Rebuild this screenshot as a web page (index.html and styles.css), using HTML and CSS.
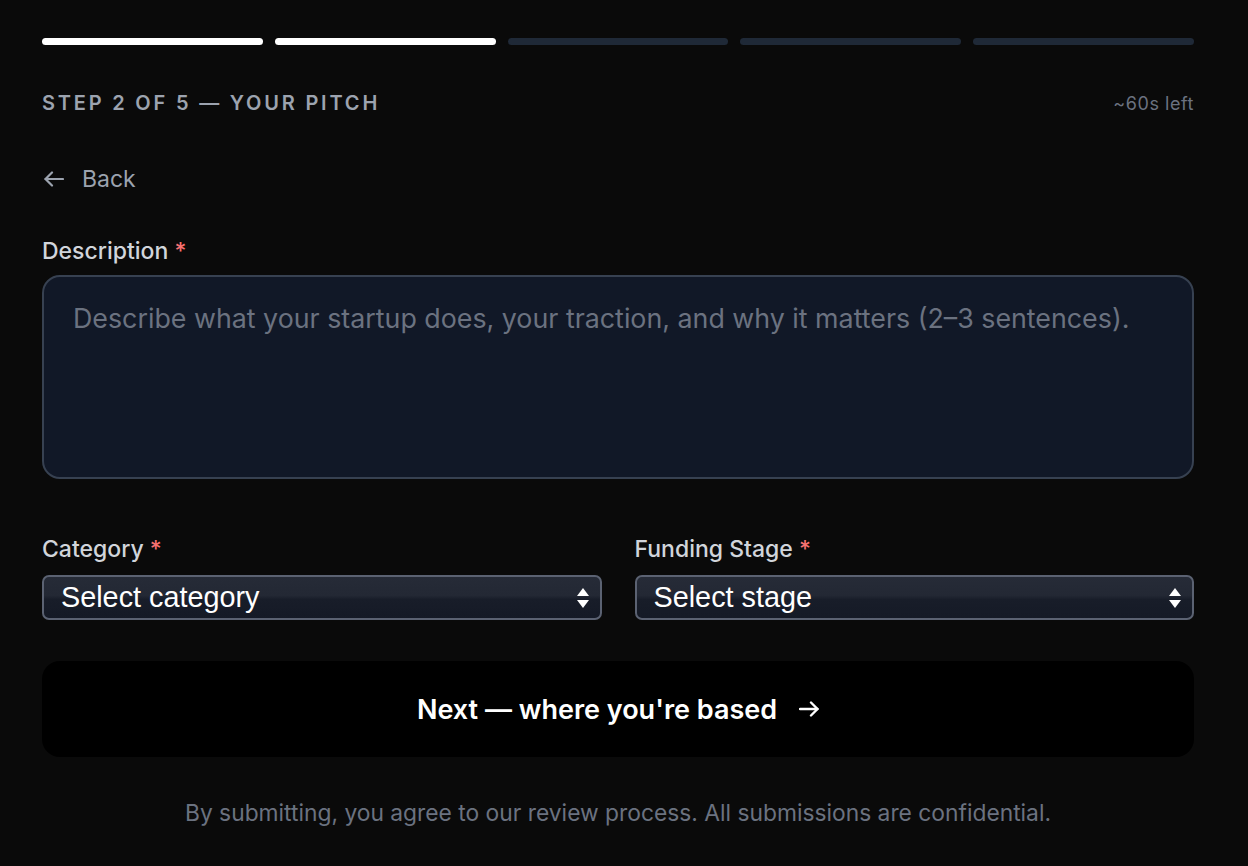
FILE: index.html
```html
<!DOCTYPE html>
<html lang="en">
<head>
<meta charset="utf-8">
<title>Step 2 of 5 — Your pitch</title>
<link rel="stylesheet" href="styles.css">
</head>
<body>
<main class="wizard">
  <div class="progress">
    <span class="seg done"></span>
    <span class="seg done"></span>
    <span class="seg"></span>
    <span class="seg"></span>
    <span class="seg"></span>
  </div>
  <div class="step-row">
    <span class="step-title">Step 2 of 5 — Your pitch</span>
    <span class="time-left">~60s left</span>
  </div>
  <button class="back" type="button">
    <svg width="20" height="16" viewBox="0 0 20 16" fill="none" stroke="currentColor" stroke-width="2.2" stroke-linecap="round" stroke-linejoin="round"><path d="M19 8H1.5"/><path d="M8 1.5L1.5 8 8 14.5"/></svg>
    <span>Back</span>
  </button>
  <div class="field">
    <label class="label">Description <span class="req">*</span></label>
    <div class="textarea"><span class="placeholder">Describe what your startup does, your traction, and why it matters (2–3 sentences).</span></div>
  </div>
  <div class="two-col">
    <div class="field">
      <label class="label">Category <span class="req">*</span></label>
      <div class="select"><span>Select category</span><svg class="updown" width="14" height="24" viewBox="0 0 14 24"><path d="M7 2L13 10H1Z" fill="#fff"/><path d="M7 22L13 14H1Z" fill="#fff"/></svg></div>
    </div>
    <div class="field">
      <label class="label">Funding Stage <span class="req">*</span></label>
      <div class="select"><span>Select stage</span><svg class="updown" width="14" height="24" viewBox="0 0 14 24"><path d="M7 2L13 10H1Z" fill="#fff"/><path d="M7 22L13 14H1Z" fill="#fff"/></svg></div>
    </div>
  </div>
  <button class="next" type="button">
    <span>Next — where you're based</span>
    <svg width="20" height="16" viewBox="0 0 20 16" fill="none" stroke="currentColor" stroke-width="2.4" stroke-linecap="round" stroke-linejoin="round"><path d="M1 8h17.5"/><path d="M12 1.5L18.5 8 12 14.5"/></svg>
  </button>
  <p class="legal">By submitting, you agree to our review process. All submissions are confidential.</p>
</main>
</body>
</html>
```
FILE: styles.css
```css
* { box-sizing: border-box; }
html, body { margin: 0; padding: 0; background: #0a0a0a; }
body { font-family: Inter, "Noto Sans", sans-serif; color: #e5e7eb; }

.wizard {
  padding: 38px 54px 0 42px;
  display: flex;
  flex-direction: column;
}

.progress { display: flex; gap: 12px; }
.seg { flex: 1; height: 7px; border-radius: 4px; background: #1f2937; }
.seg.done { background: #ffffff; }

.step-row {
  margin-top: 46px;
  display: flex;
  justify-content: space-between;
  align-items: center;
  height: 24px;
}
.step-title {
  font-size: 20px;
  font-weight: 600;
  letter-spacing: 0.14em;
  text-transform: uppercase;
  color: #9ca3af;
}
.time-left { font-size: 18px; letter-spacing: 0.03em; color: #6b7280; }

.back {
  margin-top: 50px;
  align-self: flex-start;
  display: flex;
  align-items: center;
  gap: 18px;
  background: none;
  border: 0;
  padding: 0 0 0 2px;
  color: #9ca3af;
  font: inherit;
  font-size: 23px;
  line-height: 28px;
  cursor: pointer;
}

.field { display: flex; flex-direction: column; }
.label { font-size: 23px; font-weight: 500; color: #d1d5db; line-height: 28px; }
.req { color: #f87171; }

.wizard > .field { margin-top: 44px; }
.textarea {
  margin-top: 10px;
  height: 204px;
  border: 2px solid #374151;
  border-radius: 18px;
  background: #111827;
  padding: 25px 29px;
}
.placeholder { font-size: 26.8px; color: #6b7280; line-height: 32px; }

.two-col {
  margin-top: 56px;
  display: grid;
  grid-template-columns: 1fr 1fr;
  gap: 33px;
}
.select {
  margin-top: 12px;
  height: 45px;
  border: 2px solid #5b6272;
  border-radius: 7px;
  background: linear-gradient(to bottom, #262b37 0%, #232834 45%, #181d29 55%, #151a26 100%);
  display: flex;
  align-items: center;
  justify-content: space-between;
  padding: 0 10px 0 17px;
  color: #ffffff;
  font-family: "Liberation Sans", Arial, sans-serif;
  font-size: 28.8px;
}

.next {
  margin-top: 41px;
  height: 96px;
  border: 0;
  border-radius: 18px;
  background: #000000;
  color: #ffffff;
  font: inherit;
  font-size: 27px;
  font-weight: 600;
  display: flex;
  align-items: center;
  justify-content: center;
  gap: 22px;
  cursor: pointer;
}

.legal {
  margin: 42px 0 0;
  text-align: center;
  font-size: 22.8px;
  line-height: 28px;
  color: #6b7280;
}
```
